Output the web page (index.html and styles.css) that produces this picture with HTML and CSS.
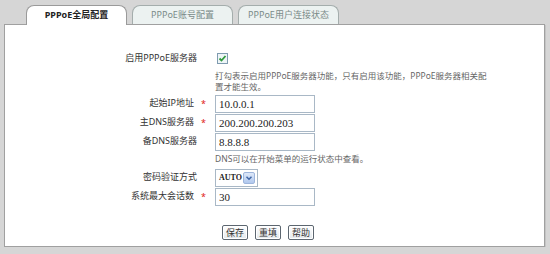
FILE: index.html
```html
<!DOCTYPE html>
<html lang="zh-CN">
<head>
    <meta charset="UTF-8" />
    <title>PPPoE全局配置</title>
    <link rel="stylesheet" href="styles.css">
</head>
<body>
<div class="tabs">
    <div class="tab active">PPPoE全局配置</div>
    <div class="tab">PPPoE账号配置</div>
    <div class="tab">PPPoE用户连接状态</div>
</div>
<div class="panel">
    <form class="config" onsubmit="return false;">
        <div class="row">
            <label class="lbl">启用PPPoE服务器</label>
            <span class="mark"></span>
            <div class="field">
                <span class="check">
                    <svg width="9" height="9" viewBox="0 0 9 9"><path d="M1.5 4.5 L3.5 6.5 L7.5 2" fill="none" stroke="#2f9a3c" stroke-width="1.8"/></svg>
                </span>
            </div>
        </div>
        <div class="hint hint-top">打勾表示启用PPPoE服务器功能，只有启用该功能，PPPoE服务器相关配置才能生效。</div>
        <div class="row">
            <label class="lbl req">起始IP地址</label>
            <span class="mark">*</span>
            <div class="field"><input class="text" type="text" value="10.0.0.1"></div>
        </div>
        <div class="row">
            <label class="lbl req">主DNS服务器</label>
            <span class="mark">*</span>
            <div class="field"><input class="text" type="text" value="200.200.200.203"></div>
        </div>
        <div class="row">
            <label class="lbl">备DNS服务器</label>
            <span class="mark"></span>
            <div class="field"><input class="text" type="text" value="8.8.8.8"></div>
        </div>
        <div class="hint hint-dns">DNS可以在开始菜单的运行状态中查看。</div>
        <div class="row">
            <label class="lbl">密码验证方式</label>
            <span class="mark"></span>
            <div class="field">
                <div class="select">
                    <span class="select-value">AUTO</span>
                    <span class="select-arrow">
                        <svg width="8" height="8" viewBox="0 0 8 8"><path d="M1.5 2.8 L4 5.3 L6.5 2.8" fill="none" stroke="#3f66a6" stroke-width="1.5"/></svg>
                    </span>
                </div>
            </div>
        </div>
        <div class="row">
            <label class="lbl req">系统最大会话数</label>
            <span class="mark">*</span>
            <div class="field"><input class="text" type="text" value="30"></div>
        </div>
        <div class="actions">
            <button type="button" class="btn">保存</button>
            <button type="button" class="btn">重填</button>
            <button type="button" class="btn">帮助</button>
        </div>
    </form>
</div>
</body>
</html>
```

FILE: styles.css
```css
* {
    margin: 0;
    padding: 0;
    box-sizing: border-box;
}
html, body {
    background-color: #d6d6d6;
    color: #333;
    font-family: "Noto Sans", "Noto Sans CJK SC", sans-serif;
    font-size: 9px;
    line-height: 1.2;
}
.tabs {
    display: flex;
    gap: 5px;
    padding: 5px 0 0 26px;
    height: 24px;
}
.tab {
    width: 101px;
    height: 19px;
    border: 1px solid #a4adac;
    border-bottom: none;
    border-radius: 8px 8px 0 0;
    background: #ecf2f1;
    color: #7a8a88;
    display: flex;
    align-items: center;
    justify-content: center;
}
.tab.active {
    background: #fff;
    border-color: #9a9a9a;
    color: #222;
    font-weight: bold;
    height: 20px;
    position: relative;
    z-index: 1;
}
.panel {
    margin: 0 5px 0 4px;
    height: 223px;
    background: #fff;
    border: 1px solid #a0a0a0;
    box-shadow: 1px 1px 0 #c4c4c4;
}
.config {
    padding-top: 24px;
}
.row {
    display: flex;
    align-items: center;
    height: 19px;
}
.lbl {
    width: 192px;
    text-align: right;
    color: #333;
}
.lbl.req {
    padding-right: 3px;
}
.mark {
    width: 18px;
    padding-left: 4px;
    color: #e02020;
    font-size: 9px;
    line-height: 10px;
}
.field {
    display: flex;
    align-items: center;
}
.check {
    width: 11px;
    height: 11px;
    margin-left: 2px;
    border: 1px solid #7f9bb0;
    background: #eef5f7;
    display: flex;
    align-items: center;
    justify-content: center;
}
.hint {
    margin-left: 210px;
    color: #666;
    font-size: 8.5px;
}
.hint-top {
    width: 276px;
    line-height: 11px;
    padding: 2px 0;
}
.hint-dns {
    line-height: 13px;
    padding: 1px 0 3px;
}
.text {
    width: 100px;
    height: 18px;
    border: 1px solid #a9b8c6;
    padding: 0 3px;
    font-family: "Liberation Serif", serif;
    font-size: 11px;
    color: #222;
    background: #fff;
    outline: none;
}
.select {
    width: 43px;
    height: 18px;
    border: 1px solid #a9b8c6;
    display: flex;
    align-items: center;
    justify-content: space-between;
    padding: 0 2px 0 3px;
    background: #fff;
}
.select-value {
    font-family: "Liberation Serif", serif;
    font-size: 8px;
    font-weight: bold;
    color: #222;
}
.select-arrow {
    width: 12px;
    height: 12px;
    border: 1px solid #9db5dc;
    border-radius: 2px;
    background: linear-gradient(#dde8f9, #b0c8ee);
    display: flex;
    align-items: center;
    justify-content: center;
}
.actions {
    display: flex;
    gap: 7px;
    margin-top: 19px;
    padding-left: 217px;
}
.btn {
    width: 26px;
    height: 15px;
    border: 1px solid #5c6670;
    border-radius: 2px;
    background: linear-gradient(#ffffff, #e3e8ec);
    box-shadow: inset 0 0 0 1px #fff;
    font-family: "Noto Sans CJK SC", sans-serif;
    font-size: 9px;
    line-height: 13px;
    color: #333;
    cursor: pointer;
}
```
